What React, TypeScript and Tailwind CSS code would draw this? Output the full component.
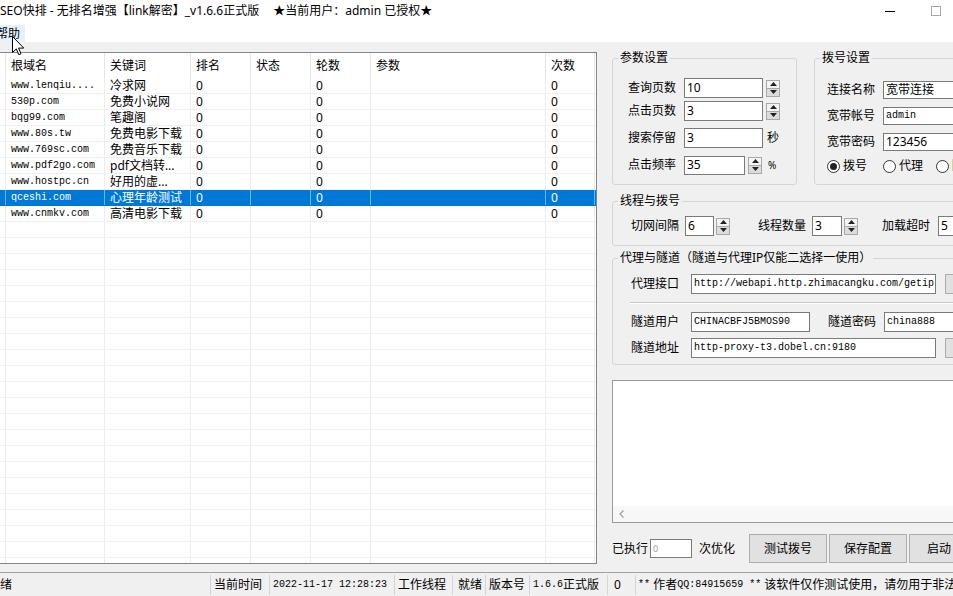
import React from 'react';

const mono = "font-['Liberation_Mono','Noto_Sans_CJK_SC',monospace] text-[10px]";

const rows = [
  ['www.lenqiu....', '冷求网'],
  ['530p.com', '免费小说网'],
  ['bqg99.com', '笔趣阁'],
  ['www.80s.tw', '免费电影下载'],
  ['www.769sc.com', '免费音乐下载'],
  ['www.pdf2go.com', 'pdf文档转...'],
  ['www.hostpc.cn', '好用的虚...'],
  ['qceshi.com', '心理年龄测试'],
  ['www.cnmkv.com', '高清电影下载'],
];

const widths = ['w-[6px]', 'w-[99px]', 'w-[86px]', 'w-[60px]', 'w-[60px]', 'w-[60px]', 'w-[175px]', 'w-[49px]'];
const heads = ['', '根域名', '关键词', '排名', '状态', '轮数', '参数', '次数'];

function Spin({ className = '' }: { className?: string }) {
  return (
    <div className={`flex flex-col w-[14px] h-[17px] shrink-0 ${className}`}>
      <div className="h-[9px] flex items-center justify-center bg-[#f4f4f4] border border-[#a8a8a8]">
        <svg width="7" height="4" viewBox="0 0 7 4">
          <path d="M3.5 0L7 4H0z" fill="#222" />
        </svg>
      </div>
      <div className="h-[9px] -mt-px flex items-center justify-center bg-[#dcdcdc] border border-[#a8a8a8]">
        <svg width="7" height="4" viewBox="0 0 7 4">
          <path d="M0 0H7L3.5 4z" fill="#222" />
        </svg>
      </div>
    </div>
  );
}

function Field({ className = '', value = '', isMono = false }: { className?: string; value?: string; isMono?: boolean }) {
  return (
    <div
      className={`bg-white border border-[#7a7a7a] shrink-0 flex items-center pl-[2px] overflow-hidden whitespace-nowrap leading-[16px] ${isMono ? mono : ''} ${className}`}
    >
      {value}
    </div>
  );
}

function Group({ title, className = '', children }: { title: string; className?: string; children?: React.ReactNode }) {
  return (
    <div className={`relative border border-[#d5d5d5] rounded-[3px] shrink-0 ${className}`}>
      <span className="absolute left-[5px] -top-[9px] px-[2px] bg-[#f0f0f0] leading-[16px] whitespace-nowrap">{title}</span>
      {children}
    </div>
  );
}

function Radio({ checked = false, label, className = '' }: { checked?: boolean; label?: string; className?: string }) {
  return (
    <div className={`flex items-center shrink-0 ${className}`}>
      <div className="w-[13px] h-[13px] rounded-full border border-[#333] bg-white flex items-center justify-center">
        {checked && <div className="w-[7px] h-[7px] rounded-full bg-[#222]" />}
      </div>
      {label && <span className="ml-[3px] leading-[16px]">{label}</span>}
    </div>
  );
}

function Btn({ label = '', className = '' }: { label?: string; className?: string }) {
  return (
    <div className={`shrink-0 bg-[#e1e1e1] border border-[#adadad] flex items-center justify-center ${className}`}>{label}</div>
  );
}

function Table() {
  const all = Array.from({ length: 31 }, (_, i) => rows[i] ?? null);
  return (
    <div className="w-[597px] h-[512px] shrink-0 bg-white border-y border-r border-[#828790] flex flex-col overflow-hidden">
      <div className="h-[25px] shrink-0 flex">
        {heads.map((h, i) => (
          <div key={i} className={`${widths[i]} shrink-0 h-full border-r border-[#e5e5e5] pl-[5px] flex items-center`}>
            {h}
          </div>
        ))}
        <div className="flex-1" />
      </div>
      {all.map((r, i) => {
        const sel = i === 7;
        const cells = r ? ['', r[0], r[1], '0', '', '0', '', '0'] : ['', '', '', '', '', '', '', ''];
        return (
          <div
            key={i}
            className={`h-[16px] shrink-0 flex border-b ${sel ? 'bg-[#0078d7] text-white border-[#0078d7]' : 'border-[#f0f0f0]'}`}
          >
            {cells.map((c, j) => (
              <div
                key={j}
                className={`${widths[j]} shrink-0 h-full border-r ${sel ? 'border-[#66b8ee]' : 'border-[#ececec]'} pl-[5px] overflow-hidden whitespace-nowrap leading-[15px] ${j === 1 ? mono : ''}`}
              >
                {c}
              </div>
            ))}
            <div className="flex-1" />
          </div>
        );
      })}
    </div>
  );
}

function RightPanel() {
  return (
    <div className="ml-[13px] pl-[2px] w-[420px] shrink-0 flex flex-col">
      <div className="mt-[6px] flex gap-[17px]">
        <Group title="参数设置" className="w-[185px] h-[127px] pt-[19px] pl-[15px]">
          <div className="flex items-center h-[20px]">
            <span className="w-[56px] shrink-0">查询页数</span>
            <Field className="w-[79px] h-[20px]" value="10" />
            <Spin className="ml-[3px]" />
          </div>
          <div className="flex items-center h-[20px] mt-[3px]">
            <span className="w-[56px] shrink-0">点击页数</span>
            <Field className="w-[79px] h-[20px]" value="3" />
            <Spin className="ml-[3px]" />
          </div>
          <div className="flex items-center h-[20px] mt-[7px]">
            <span className="w-[56px] shrink-0">搜索停留</span>
            <Field className="w-[79px] h-[20px]" value="3" />
            <span className="ml-[4px]">秒</span>
          </div>
          <div className="flex items-center h-[20px] mt-[7px]">
            <span className="w-[56px] shrink-0">点击频率</span>
            <Field className="w-[61px] h-[19px]" value="35" />
            <Spin className="ml-[3px]" />
            <span className="ml-[6px] text-[10px]">%</span>
          </div>
        </Group>
        <Group title="拨号设置" className="w-[190px] h-[127px] pt-[22px] pl-[12px]">
          <div className="flex items-center h-[18px]">
            <span className="w-[56px] shrink-0">连接名称</span>
            <Field className="w-[110px] h-[18px]" value="宽带连接" />
          </div>
          <div className="flex items-center h-[18px] mt-[8px]">
            <span className="w-[56px] shrink-0">宽带帐号</span>
            <Field className="w-[110px] h-[18px]" value="admin" isMono />
          </div>
          <div className="flex items-center h-[18px] mt-[8px]">
            <span className="w-[56px] shrink-0">宽带密码</span>
            <Field className="w-[110px] h-[18px]" value="123456" />
          </div>
          <div className="flex items-center h-[16px] mt-[7px]">
            <Radio checked label="拨号" />
            <Radio label="代理" className="ml-[16px]" />
            <Radio label="隧道" className="ml-[13px]" />
          </div>
        </Group>
      </div>

      <Group title="线程与拨号" className="mt-[16px] w-[420px] h-[45px] pt-[14px] pl-[18px]">
        <div className="flex items-center h-[20px]">
          <span className="w-[54px] shrink-0">切网间隔</span>
          <Field className="w-[29px] h-[20px]" value="6" />
          <Spin className="ml-[2px]" />
          <span className="ml-[28px] w-[54px] shrink-0">线程数量</span>
          <Field className="w-[30px] h-[20px]" value="3" />
          <Spin className="ml-[2px]" />
          <span className="ml-[24px] w-[56px] shrink-0">加载超时</span>
          <Field className="w-[40px] h-[20px]" value="5" />
        </div>
      </Group>

      <Group title="代理与隧道（隧道与代理IP仅能二选择一使用）" className="mt-[12px] w-[420px] h-[107px] pt-[15px] pl-[18px]">
        <div className="flex items-center h-[20px]">
          <span className="w-[60px] shrink-0">代理接口</span>
          <Field className="w-[245px] h-[20px]" value="http://webapi.http.zhimacangku.com/getip'" isMono />
          <Btn className="ml-[9px] w-[40px] h-[20px]" />
        </div>
        <div className="mt-[8px] -ml-[1px] w-[400px] h-[2px] border-t border-[#c8c8c8] border-b border-b-white" />
        <div className="flex items-center h-[20px] mt-[8px]">
          <span className="w-[60px] shrink-0">隧道用户</span>
          <Field className="w-[119px] h-[20px]" value="CHINACBFJ5BMOS90" isMono />
          <span className="ml-[18px] w-[56px] shrink-0">隧道密码</span>
          <Field className="w-[100px] h-[20px]" value="china888" isMono />
        </div>
        <div className="flex items-center h-[20px] mt-[6px]">
          <span className="w-[60px] shrink-0">隧道地址</span>
          <Field className="w-[245px] h-[20px]" value="http-proxy-t3.dobel.cn:9180" isMono />
          <Btn className="ml-[9px] w-[40px] h-[20px]" />
        </div>
      </Group>

      <div className="mt-[15px] h-[143px] w-[420px] shrink-0 border border-[#9a9a9a] bg-white flex flex-col">
        <div className="flex-1" />
        <div className="h-[16px] shrink-0 bg-[#f7f7f7] flex items-center pl-[6px]">
          <svg width="5" height="8" viewBox="0 0 5 8">
            <path d="M4.5 0.5L1 4l3.5 3.5" fill="none" stroke="#a0a0a0" strokeWidth="1.2" />
          </svg>
        </div>
      </div>

      <div className="mt-[11px] h-[29px] flex items-center">
        <span className="w-[38px] shrink-0">已执行</span>
        <Field className="w-[42px] h-[19px] text-[9px] text-[#999]" value="0" />
        <span className="ml-[7px] shrink-0">次优化</span>
        <Btn label="测试拨号" className="ml-[14px] w-[78px] h-[29px]" />
        <Btn label="保存配置" className="ml-[2px] w-[78px] h-[29px]" />
        <Btn label="启动" className="ml-[2px] w-[60px] h-[29px]" />
      </div>
    </div>
  );
}

function StatusBar() {
  return (
    <div className="h-[24px] shrink-0 border-t border-[#a0a0a0] bg-[#f0f0f0] flex items-center whitespace-nowrap leading-[16px]">
      <div className="w-[210px] shrink-0 h-full flex items-center">绪</div>
      <div className="w-[59px] shrink-0 h-[20px] border-l border-[#d4d4d4] flex items-center pl-[3px]">当前时间</div>
      <div className={`w-[125px] shrink-0 h-[20px] border-l border-[#d4d4d4] flex items-center pl-[3px] ${mono}`}>2022-11-17 12:28:23</div>
      <div className="w-[58px] shrink-0 h-[20px] border-l border-[#d4d4d4] flex items-center pl-[3px]">工作线程</div>
      <div className="w-[33px] shrink-0 h-[20px] border-l border-[#d4d4d4] flex items-center pl-[5px]">就绪</div>
      <div className="w-[44px] shrink-0 h-[20px] border-l border-[#d4d4d4] flex items-center pl-[3px]">版本号</div>
      <div className="w-[78px] shrink-0 h-[20px] border-l border-[#d4d4d4] flex items-center pl-[3px]">
        <span className={mono}>1.6.6</span>正式版
      </div>
      <div className="w-[28px] shrink-0 h-[20px] border-l border-[#d4d4d4] flex items-center pl-[6px]">0</div>
      <div className="flex-1 h-[20px] border-l border-[#d4d4d4] flex items-center pl-[2px]">
        <span className={mono}>**</span>&nbsp;作者<span className={mono}>QQ:84915659 **</span>&nbsp;该软件仅作测试使用，请勿用于非法用途
      </div>
    </div>
  );
}

export default function App() {
  return (
    <div className="relative w-[953px] h-[596px] overflow-hidden bg-[#f0f0f0] flex flex-col text-[12px] text-black font-['Noto_Sans','Noto_Sans_CJK_SC',sans-serif]">
      {/* title bar */}
      <div className="h-[22px] shrink-0 bg-white flex items-center whitespace-nowrap leading-[16px]">
        <span>SEO快排 - 无排名增强【link解密】_v1.6.6正式版</span>
        <span className="ml-[14px]">★当前用户：admin 已授权★</span>
        <div className="ml-auto flex items-center">
          <div className="w-[10px] h-px bg-black" />
          <div className="ml-[36px] mr-[12px] w-[10px] h-[10px] border border-[#a8a8a8]" />
        </div>
      </div>
      {/* menu */}
      <div className="h-[20px] shrink-0 bg-white flex items-start">
        <div className="mt-[3px] h-[17px] w-[25px] bg-[#e5f1fb] flex items-center overflow-hidden">
          <span className="-ml-[4px] whitespace-nowrap leading-[16px]">帮助</span>
        </div>
      </div>
      {/* main */}
      <div className="flex-1 min-h-0 flex pt-[10px]">
        <Table />
        <RightPanel />
      </div>
      <StatusBar />
      {/* mouse pointer */}
      <svg className="absolute left-[12px] top-[36px]" width="13" height="20" viewBox="0 0 13 20">
        <path d="M0.5 0.5V16.5L4.3 12.9L6.8 18.7L9 17.8L6.6 12.1H11.8Z" fill="#fff" stroke="#000" strokeWidth="1" strokeLinejoin="round" />
      </svg>
    </div>
  );
}
